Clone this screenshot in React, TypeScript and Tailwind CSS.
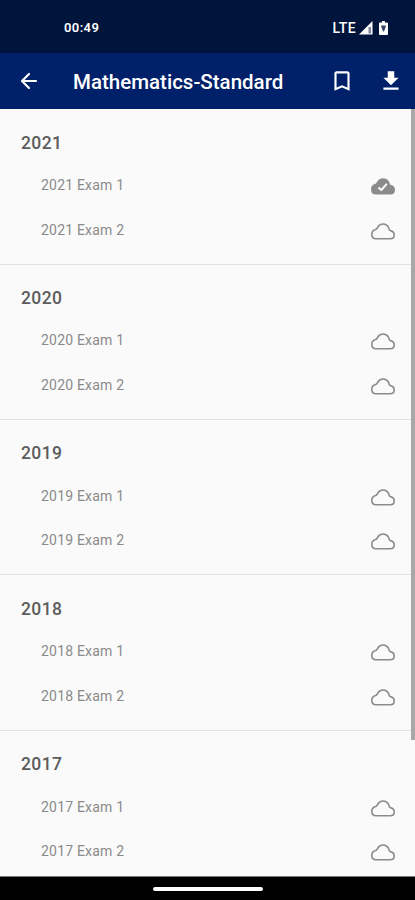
import React from 'react';

interface Exam {
  name: string;
  downloaded: boolean;
}

interface YearGroup {
  year: number;
  exams: Exam[];
}

const groups: YearGroup[] = [2021, 2020, 2019, 2018, 2017].map((year) => ({
  year,
  exams: [
    { name: `${year} Exam 1`, downloaded: year === 2021 },
    { name: `${year} Exam 2`, downloaded: false }
  ]
}));

const CloudIcon: React.FC<{ downloaded: boolean }> = ({ downloaded }) => (
  <svg viewBox="0 0 24 17" className="w-6 h-[17px] shrink-0 relative top-px" fill="none" strokeLinejoin="round">
    <path
      d="M5 15.7H19.2C21.5 15.7 23.2 14.1 23.2 11.9C23.2 9.8 21.8 8.2 19.4 7.6C18.2 7.2 18.2 5.8 17.4 4.2C16.4 2.1 14.4 1 12.1 1C9.7 1 7.8 2.2 6.8 4.2C6.3 5.3 5.8 6 4.7 6.5C2.3 7.2 .8 8.9 .8 11.2C.8 13.8 2.5 15.7 5 15.7Z"
      fill={downloaded ? '#8b8b8b' : 'none'}
      stroke="#8b8b8b"
      strokeWidth="1.6"
    />
    {downloaded && <path d="M7.4 9.4L10.3 12L15.8 5.8" stroke="#fafafa" strokeWidth="2" />}
  </svg>
);

const StatusBar: React.FC = () => (
  <div className="h-[53px] shrink-0 bg-[#00143c] flex items-center justify-between pl-16 pr-[27px] text-white">
    <span className="text-[13px] font-semibold leading-none tracking-[0.4px] pt-[2px]">00:49</span>
    <div className="flex items-center pt-[2px]">
      <span className="text-[14px] font-medium leading-none tracking-[0.4px]">LTE</span>
      <svg viewBox="0 0 14 14" className="w-[14px] h-[14px] ml-[3px]">
        <path d="M0 13.5L13.5 0V13.5Z" fill="#fff" />
        <path d="M9.5 6H12V12.5H9.5Z" fill="#7f879c" />
      </svg>
      <svg viewBox="0 0 9 14" className="w-[9px] h-[14px] ml-[6px]">
        <path d="M3 0H6V1.5H8Q9 1.5 9 2.5V13Q9 14 8 14H1Q0 14 0 13V2.5Q0 1.5 1 1.5H3Z" fill="#fff" />
        <path d="M2 4.5H7L6 8L4.8 10.5H4.2L3 8Z" fill="#3a4764" />
      </svg>
    </div>
  </div>
);

const AppBar: React.FC = () => (
  <header className="h-14 shrink-0 bg-[#002069] flex items-center pl-[17px] pr-3 text-white">
    <svg
      viewBox="0 0 24 24"
      className="w-6 h-6"
      fill="none"
      stroke="currentColor"
      strokeWidth="2.2"
      strokeLinecap="round"
      strokeLinejoin="round"
    >
      <path d="M19 12H5.2M12 5L5 12L12 19" />
    </svg>
    <h1 className="ml-8 pt-[2px] flex-1 text-[20.5px] font-medium leading-none whitespace-nowrap">Mathematics-Standard</h1>
    <svg viewBox="0 0 24 24" className="w-[26px] h-[26px]" fill="currentColor">
      <path d="M17 3H7c-1.1 0-2 .9-2 2v16l7-3 7 3V5c0-1.1-.9-2-2-2zm0 15l-5-2.18L7 18V5h10v13z" />
    </svg>
    <svg viewBox="0 0 24 24" className="w-[26px] h-[26px] ml-[23px] -mr-px" fill="currentColor">
      <path d="M19 9h-4V3H9v6H5l7 7 7-7zM5 18v2h14v-2H5z" />
    </svg>
  </header>
);

export default function App() {
  return (
    <div className="w-full h-[900px] flex flex-col overflow-hidden bg-[#fafafa] font-[Roboto,sans-serif]">
      <StatusBar />
      <AppBar />

      {/* Exam list grouped by year */}
      <main className="relative flex-1 min-h-0 overflow-hidden pt-[0.3px]">
        {groups.map((group) => (
          <section key={group.year} className="h-[155.4px] pt-[13px] border-b border-[#e2e2e2]">
            <h2 className="h-[41px] flex items-center pl-[21px] text-[17.5px] font-medium tracking-[0.4px] text-[#5c5c5c]">
              {group.year}
            </h2>
            {group.exams.map((exam) => (
              <div key={exam.name} className="h-[44.5px] flex items-center justify-between pl-[41px] pr-5">
                <span className="text-[14px] tracking-[0.2px] text-[#8a8a8a]">{exam.name}</span>
                <CloudIcon downloaded={exam.downloaded} />
              </div>
            ))}
          </section>
        ))}
        {/* Scrollbar thumb */}
        <div className="absolute top-0 right-0 w-1 h-[631px] bg-[#a8a8a8]" />
      </main>

      {/* Gesture navigation bar */}
      <div className="h-6 shrink-0 bg-black border-t border-[#777] flex items-center justify-center">
        <div className="w-[110px] h-1 rounded-full bg-white" />
      </div>
    </div>
  );
}
